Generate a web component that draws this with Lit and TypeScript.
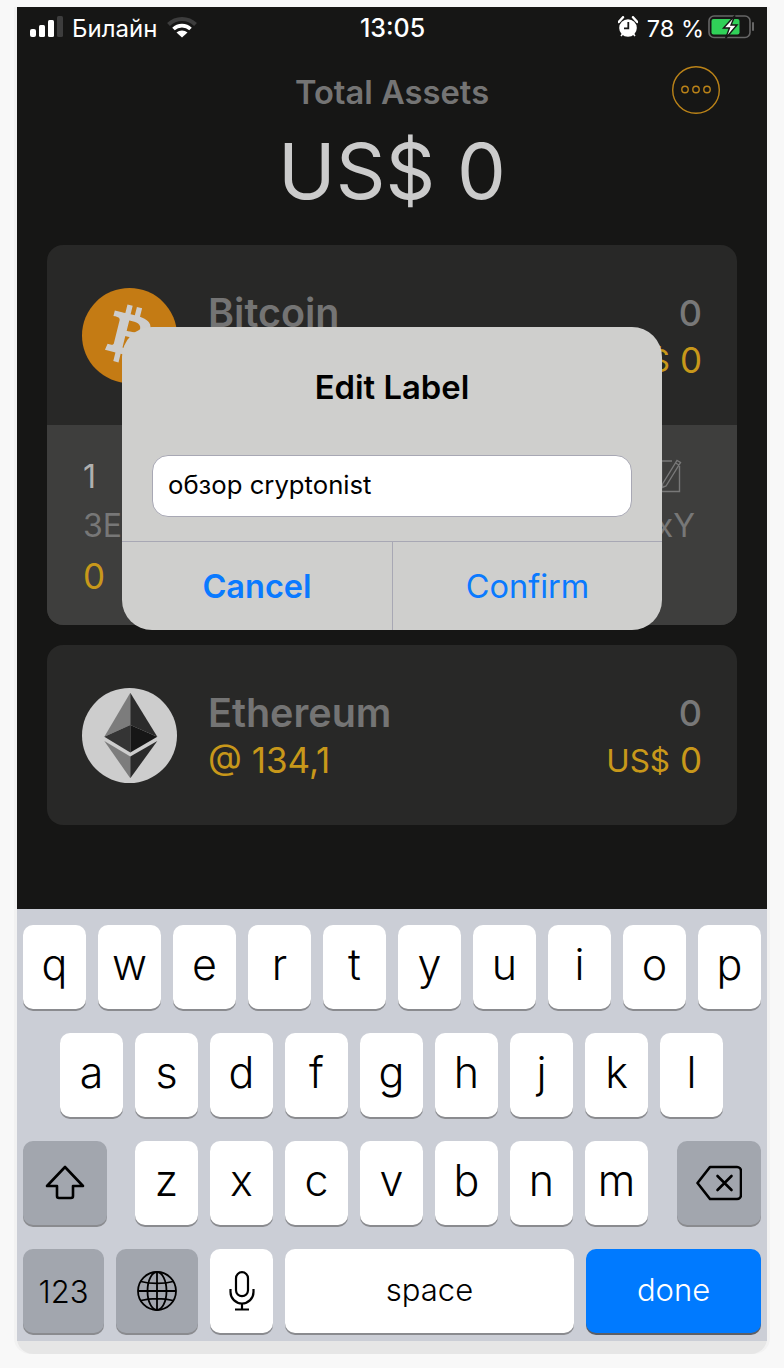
import { LitElement, html, css, svg } from "lit";
import { customElement } from "lit/decorators.js";

const btc = svg`<svg class="coin" viewBox="0 0 24 24"><circle cx="12" cy="12" r="12" fill="#c47b14"/><path fill="#cdcdcd" fill-rule="evenodd" d="M17.288 10.291c.24-1.59-.974-2.45-2.64-3.03l.54-2.153-1.315-.33-.525 2.107c-.345-.087-.705-.167-1.064-.25l.526-2.127-1.32-.33-.54 2.165c-.285-.067-.565-.132-.84-.2l-1.815-.45-.35 1.407s.975.225.955.236c.535.136.63.486.615.766l-1.477 5.92c-.075.166-.24.406-.614.314.015.02-.96-.24-.96-.24l-.66 1.51 1.71.426.93.242-.54 2.19 1.32.327.54-2.17c.36.1.705.19 1.05.273l-.51 2.154 1.32.33.545-2.19c2.24.427 3.93.257 4.64-1.774.57-1.637-.03-2.58-1.217-3.196.854-.193 1.5-.76 1.68-1.93h.01zM14.278 14.511c-.404 1.64-3.157.75-4.05.53l.72-2.9c.896.23 3.757.67 3.33 2.37zM14.688 10.271c-.37 1.49-2.662.735-3.405.55l.654-2.64c.744.18 3.137.524 2.75 2.084v.006z"/></svg>`;

const eth = svg`<svg class="coin" viewBox="0 0 95 95"><circle cx="47.5" cy="47.5" r="47.5" fill="#cdcdcd"/>
<polygon points="48.3,4.7 22.3,48.7 48.3,37" fill="#7c7c7c"/><polygon points="48.3,4.7 75.3,48.7 48.3,37" fill="#2b2b2b"/>
<polygon points="22.3,48.7 48.3,37 48.3,64.5" fill="#343434"/><polygon points="75.3,48.7 48.3,37 48.3,64.5" fill="#161616"/>
<polygon points="22.3,53 48.3,68.5 48.3,90.3" fill="#7c7c7c"/><polygon points="75.3,53 48.3,68.5 48.3,90.3" fill="#2b2b2b"/></svg>`;

const signal = svg`<svg class="ic" width="33" height="22" viewBox="0 0 33 22"><rect x="0" y="13" width="6" height="8" rx="2" fill="#fff"/><rect x="9" y="9" width="6" height="12" rx="1.5" fill="#fff"/><rect x="18" y="4" width="6" height="17" rx="1.5" fill="#fff"/><rect x="27" y="0" width="6" height="21" rx="1.5" fill="#3d3d3d"/></svg>`;

const wifi = svg`<svg class="ic" width="30" height="24" viewBox="0 0 30 24"><path d="M1.5 9.5C9 2 21 2 28.5 9.5" fill="none" stroke="#3d3d3d" stroke-width="4"/><path d="M6.5 14C11 9.5 19 9.5 23.5 14" fill="none" stroke="#fff" stroke-width="3.6"/><path d="M15 22.5L9.5 17.5C12.5 14.8 17.5 14.8 20.5 17.5Z" fill="#fff"/></svg>`;

const alarm = svg`<svg class="ic" width="20" height="22" viewBox="0 0 20 22"><circle cx="10" cy="12" r="8.8" fill="#fff"/><path d="M0.8 6L5 1.2M19.2 6L15 1.2" stroke="#fff" stroke-width="2.4" stroke-linecap="round"/><path d="M3 20l1.6-2M17 20l-1.6-2" stroke="#fff" stroke-width="1.6"/><path d="M10.3 6v6.3H6" fill="none" stroke="#161615" stroke-width="1.8"/></svg>`;

const battery = svg`<svg class="ic" width="47" height="24" viewBox="0 0 47 24"><rect x="1" y="1" width="41" height="21.5" rx="5" fill="none" stroke="#666" stroke-width="1.6"/><path d="M45 8v7" stroke="#666" stroke-width="2" stroke-linecap="round"/><rect x="3.5" y="4" width="28" height="15.5" rx="2" fill="#30d158"/><path d="M27 0.5L15.5 13h6L17.5 23.5l11.5-13.5h-6z" fill="#fff" stroke="#161615" stroke-width="1.4"/></svg>`;

const pen = svg`<svg class="pen" width="22" height="38" viewBox="0 0 22 38" fill="none" stroke="#787878" stroke-width="1.4"><path d="M12 5H1.5v30.5h18V10"/><path d="M2.5 28L17 4.5l3.5 2L6 30l-3.5 1.5z"/><path d="M15.5 7l3.5 2"/></svg>`;

const shift = svg`<svg width="40" height="36" viewBox="0 0 40 36" fill="none" stroke="#000" stroke-width="2.6" stroke-linejoin="round"><path d="M20 2L2 21h10v10a2 2 0 0 0 2 2h12a2 2 0 0 0 2-2V21h10z"/></svg>`;

const del = svg`<svg width="46" height="36" viewBox="0 0 46 36" fill="none" stroke="#000" stroke-width="2.6" stroke-linejoin="round"><path d="M14 2h27a4 4 0 0 1 4 4v24a4 4 0 0 1-4 4H14L1.5 18z"/><path d="M21.5 11l14 14M35.5 11l-14 14" stroke-linecap="round"/></svg>`;

const globe = svg`<svg width="40" height="40" viewBox="0 0 40 40" fill="none" stroke="#000" stroke-width="1.8"><circle cx="20" cy="20" r="19"/><ellipse cx="20" cy="20" rx="9.5" ry="19"/><path d="M20 1v38M1 20h38M4 10.5c9 2.6 23 2.6 32 0M4 29.5c9-2.6 23-2.6 32 0"/></svg>`;

const mic = svg`<svg width="26" height="40" viewBox="0 0 26 40" fill="none" stroke="#000" stroke-width="2.2"><rect x="7" y="1.2" width="12" height="24" rx="6"/><path d="M1.5 18v3a11.5 11.5 0 0 0 23 0v-3M13 33v5M6 38.5h14"/></svg>`;

const dots = svg`<svg width="48" height="48" viewBox="0 0 48 48" fill="none" stroke="#bb8318"><circle cx="24" cy="24" r="23.3" stroke-width="1.4"/><g stroke-width="1.4"><circle cx="13" cy="23.5" r="3.2"/><circle cx="24" cy="23.5" r="3.2"/><circle cx="35" cy="23.5" r="3.2"/></g></svg>`;

@customElement("app-root")
export class AppRoot extends LitElement {
  static styles = css`
    :host { display: block; width: 784px; height: 1368px; background: #f8f8f8; font-family: Inter, "Noto Sans", sans-serif; overflow: hidden; }
    .frame { margin: 7px 17px 0; width: 750px; background: #e6e6e6; padding-bottom: 13px; border-radius: 0 0 16px 16px; box-shadow: -3px 0 0 #f2f2f2, 3px 0 0 #f2f2f2; }
    .phone { position: relative; height: 1334px; display: flex; flex-direction: column; background: #161615; overflow: hidden; }
    .status { height: 36px; padding: 3px 12px 0 13px; display: grid; grid-template-columns: 1fr auto 1fr; align-items: center; color: #fff; font-size: 24px; }
    .status .ic { margin-bottom: 3px; }
    .status .l, .status .r { display: flex; align-items: center; }
    .status .r { justify-content: flex-end; font-size: 23.5px; }
    .status .l span { margin: 0 10px 0 9px; }
    .status .t { font-weight: 500; font-size: 25px; }
    .status .r span { margin: 0 4px 0 9px; }
    .head { position: relative; display: flex; flex-direction: column; align-items: center; height: 199px; }
    .head h1 { margin: 23px 0 0; font-size: 32.7px; line-height: 46px; font-weight: 600; color: #747474; }
    .head .total { font-size: 77.5px; line-height: 92px; font-weight: 430; color: #cbcbcb; margin-top: 10px; }
    .more { position: absolute; right: 47px; top: 20px; width: 48px; height: 48px; }
    .list { display: flex; flex-direction: column; gap: 20px; padding: 0 30px; flex: 1; }
    .card { background: #282827; border-radius: 16px; overflow: hidden; }
    .top { height: 180px; display: flex; align-items: center; padding: 0 35px; gap: 31px; }
    .coin { width: 95px; height: 95px; flex: none; }
    .names { flex: 1; display: flex; flex-direction: column; padding-top: 4px; }
    .title { font-size: 39.5px; line-height: 47px; font-weight: 600; color: #747474; }
    .gold { font-size: 35px; line-height: 47px; color: #c8981a; }
    .cur { font-size: 31.5px; vertical-align: 1px; }
    .amounts { display: flex; flex-direction: column; align-items: flex-end; padding-top: 4px; }
    .amt { font-size: 36px; line-height: 47px; font-weight: 500; color: #787878; }
    .detail { height: 200px; box-sizing: border-box; background: #3e3e3d; padding: 29px 42px 0 36px; display: flex; flex-direction: column; }
    .rowx { display: flex; justify-content: space-between; align-items: center; }
    .one { font-size: 32px; line-height: 46px; color: #b0b0b0; }
    .pen { margin-right: 13px; margin-top: -4px; }
    .addr { font-size: 32px; line-height: 50px; color: #777; margin-top: 1px; margin-bottom: 2px; }
    .dialog { position: absolute; left: 105px; top: 320px; width: 540px; height: 303px; background: #cfcfcd; border-radius: 30px; display: flex; flex-direction: column; overflow: hidden; }
    .dialog h2 { margin: 0; height: 128px; padding-top: 37px; box-sizing: border-box; text-align: center; font-size: 32.8px; line-height: 46px; font-weight: 600; color: #000; }
    .input { margin: 0 30px; height: 62px; box-sizing: border-box; background: #fff; border: 1px solid #a8a8b4; border-radius: 16px; padding: 0 15px 3px; display: flex; align-items: center; font-size: 25.7px; color: #000; }
    .btns { margin-top: 24px; flex: 1; border-top: 1px solid #a8a8b4; display: grid; grid-template-columns: 1fr 1fr; }
    .btns div { display: flex; align-items: center; justify-content: center; font-size: 32.5px; color: #0a7aff; }
    .btns .cancel { font-weight: 600; }
    .btns .confirm { border-left: 1px solid #a8a8b4; }
    .kb { height: 432px; box-sizing: border-box; background: #cbced6; padding: 16px 6px 0; display: flex; flex-direction: column; gap: 24px; }
    .krow { display: flex; gap: 12px; height: 84px; }
    .krow.two { padding-left: 37px; }
    .key { width: 63px; height: 84px; border-radius: 10px; background: #fff; box-shadow: 0 2px 0 #8a8b8f; display: flex; align-items: center; justify-content: center; font-size: 43px; font-weight: 350; color: #000; }
    .key.letter { padding-bottom: 6px; box-sizing: border-box; }
    .key.dark { background: #a2a6ae; }
    .key.wide { width: 84px; }
    .shiftgap { margin-right: 16px; }
    .delgap { margin-left: 17px; }
    .small { font-size: 31px; box-sizing: border-box; padding-bottom: 3px; }
    .w81 { width: 81px; padding-bottom: 0; }
    .w82 { width: 82px; }
    .key.space { width: 289px; }
    .key.done { width: 175px; background: #007aff; color: #fff; box-shadow: 0 2px 0 #5c5f66; }
  `;

  private keys(s: string) {
    return s.split("").map((c) => html`<div class="key letter">${c}</div>`);
  }

  render() {
    return html`
      <div class="frame">
        <div class="phone">
          <div class="status">
            <div class="l">${signal}<span>Билайн</span>${wifi}</div>
            <div class="t">13:05</div>
            <div class="r">${alarm}<span>78 %</span>${battery}</div>
          </div>
          <div class="head">
            <h1>Total Assets</h1>
            <div class="total">US$ 0</div>
            <div class="more">${dots}</div>
          </div>
          <div class="list">
            <div class="card">
              <div class="top">
                ${btc}
                <div class="names"><div class="title">Bitcoin</div><div class="gold">&nbsp;</div></div>
                <div class="amounts"><div class="amt">0</div><div class="gold"><span class="cur">US$</span> 0</div></div>
              </div>
              <div class="detail">
                <div class="rowx"><div class="one">1</div>${pen}</div>
                <div class="rowx addr"><span>3E</span><span>xY</span></div>
                <div class="gold">0</div>
              </div>
            </div>
            <div class="card">
              <div class="top">
                ${eth}
                <div class="names"><div class="title">Ethereum</div><div class="gold">@ 134,1</div></div>
                <div class="amounts"><div class="amt">0</div><div class="gold"><span class="cur">US$</span> 0</div></div>
              </div>
            </div>
          </div>
          <div class="kb">
            <div class="krow">${this.keys("qwertyuiop")}</div>
            <div class="krow two">${this.keys("asdfghjkl")}</div>
            <div class="krow">
              <div class="key dark wide shiftgap">${shift}</div>
              ${this.keys("zxcvbnm")}
              <div class="key dark wide delgap">${del}</div>
            </div>
            <div class="krow">
              <div class="key dark small w81">123</div>
              <div class="key dark w82">${globe}</div>
              <div class="key">${mic}</div>
              <div class="key small space">space</div>
              <div class="key small done">done</div>
            </div>
          </div>
          <div class="dialog">
            <h2>Edit Label</h2>
            <div class="input">обзор cryptonist</div>
            <div class="btns"><div class="cancel">Cancel</div><div class="confirm">Confirm</div></div>
          </div>
        </div>
      </div>
    `;
  }
}
